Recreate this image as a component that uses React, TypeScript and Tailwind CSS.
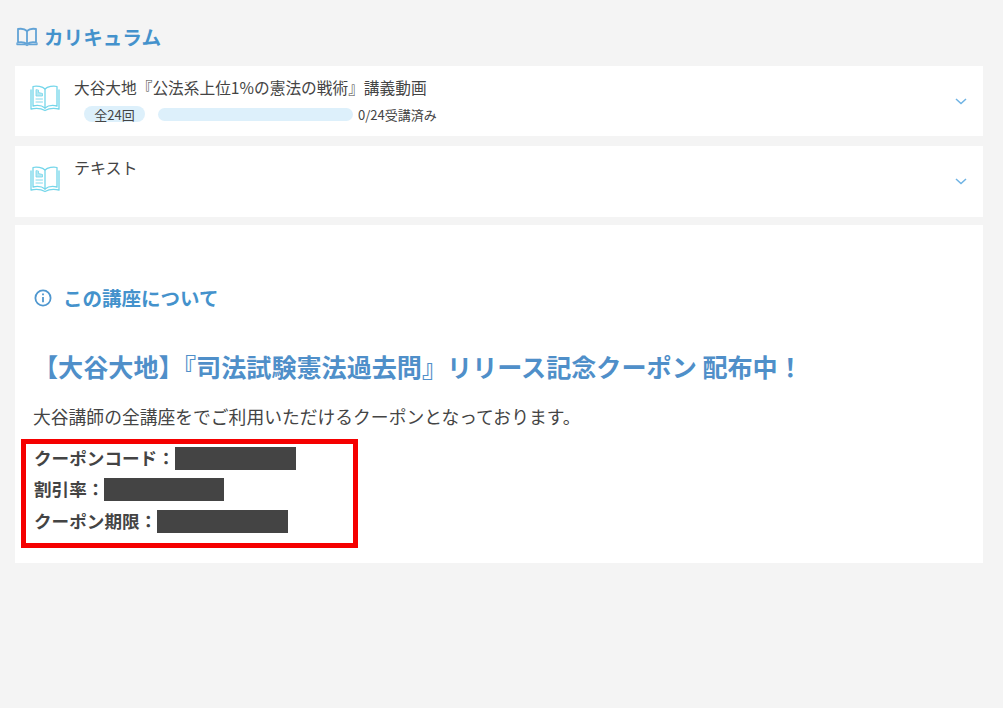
const font = { fontFamily: '"Noto Sans CJK JP", "Liberation Sans", sans-serif' };

function OpenBook() {
  return (
    <svg width="30" height="28" viewBox="0 0 30 28" fill="none" stroke="#74d6ea" strokeWidth="1.3" strokeLinejoin="round" strokeLinecap="round" className="shrink-0">
      <path d="M15 5C12.5 2.5 6.5 1.5 3 2.5V22C7 21 12 21.5 15 24C18 21.5 23 21 27 22V2.5C23.5 1.5 17.5 2.5 15 5Z" />
      <path d="M15 5V24" />
      <path d="M1 6V25C6 24 11.5 24.5 15 26.5C18.5 24.5 24 24 29 25V6" />
      <path d="M6 6V12H12.5V9.5L8.5 8.5V6.5Z" fill="#b5e8f2" strokeWidth="0.8" />
      <path d="M6 15H12.5M6 18H12.5" strokeWidth="0.9" />
    </svg>
  );
}

function SmallBook() {
  return (
    <svg width="22" height="20" viewBox="0 0 22 20" fill="none" stroke="#62a3d6" strokeWidth="1.8" strokeLinejoin="round">
      <path d="M11 4C9 2 5 1.5 2 2V15.5C5 15 9 15.5 11 17C13 15.5 17 15 20 15.5V2C17 1.5 13 2 11 4Z" />
      <path d="M11 4V17" />
      <path d="M1 15.5V17.5H9L11 18.5L13 17.5H21V15.5" strokeWidth="1.3" />
    </svg>
  );
}

function Chevron() {
  return (
    <svg width="12" height="7" viewBox="0 0 12 7" fill="none" stroke="#6fb3e4" strokeWidth="1.5" className="shrink-0">
      <path d="M1 1L6 5.5L11 1" />
    </svg>
  );
}

function Info() {
  return (
    <svg width="18" height="18" viewBox="0 0 18 18" fill="none" stroke="#4f97cf" strokeWidth="1.8" className="shrink-0">
      <circle cx="9" cy="9" r="7.6" />
      <path d="M9 8V13.2" />
      <path d="M9 4.4V6.2" />
    </svg>
  );
}

function Redact({ w }: { w: string }) {
  return <span className={`inline-block h-[23px] bg-[#444444] ${w}`} />;
}

export default function App() {
  return (
    <div style={font} className="h-[708px] w-[1003px] overflow-hidden bg-[#f4f4f4] px-[15px] pt-[25px] text-[#444444]">
      <div className="flex h-[24px] items-center gap-[6px] pl-[1px]">
        <SmallBook />
        <h2 className="text-[19.6px] leading-none font-bold text-[#4492cc]">カリキュラム</h2>
      </div>

      <div className="mt-[17px] flex h-[70px] w-[968px] items-center bg-white pr-[16px] pl-[15px]">
        <div className="mt-[-6px]"><OpenBook /></div>
        <div className="ml-[14px] flex min-w-0 flex-1 flex-col self-start pt-[11px]">
          <div className="text-[15.7px] leading-[21px] whitespace-nowrap">大谷大地『公法系上位1%の憲法の戦術』講義動画</div>
          <div className="mt-[8px] flex items-center pl-[10px]">
            <span className="flex h-[16px] w-[61px] items-center justify-center rounded-full bg-[#ddf0fb] text-[13px] leading-none">全24回</span>
            <span className="ml-[13px] h-[13px] w-[195px] rounded-full bg-[#ddf0fb]" />
            <span className="ml-[5px] text-[13px] leading-none">0/24受講済み</span>
          </div>
        </div>
        <Chevron />
      </div>

      <div className="mt-[10px] flex h-[71px] w-[968px] items-center bg-white pr-[16px] pl-[15px]">
        <div className="mt-[-6px]"><OpenBook /></div>
        <div className="ml-[14px] flex-1 self-start pt-[11px] text-[16px] leading-[21px]">テキスト</div>
        <Chevron />
      </div>

      <div className="mt-[8px] h-[338px] w-[968px] bg-white pt-[59px]">
        <div className="flex h-[28px] items-center gap-[11px] pl-[19px]">
          <Info />
          <h3 className="text-[19.5px] leading-none font-bold text-[#4492cc]">この講座について</h3>
        </div>
        <h1 className="mt-[38px] pl-[18px] text-[25.1px] leading-[32px] font-bold whitespace-nowrap text-[#4f8fc9]">
          【大谷大地】『司法試験憲法過去問』リリース記念クーポン 配布中！
        </h1>
        <p className="mt-[21px] pl-[18px] text-[17.8px] leading-[26px] whitespace-nowrap">大谷講師の全講座をでご利用いただけるクーポンとなっております。</p>
        <div className="mt-[10px] ml-[6px] h-[109px] w-[337px] border-[5px] border-[#f50000] pt-[3px] pl-[8px] text-[17.6px] font-bold">
          <div className="flex h-[23px] items-center">クーポンコード：<Redact w="w-[121px]" /></div>
          <div className="mt-[8px] flex h-[23px] items-center">割引率：<Redact w="w-[120px]" /></div>
          <div className="mt-[9px] flex h-[23px] items-center">クーポン期限：<Redact w="w-[131px]" /></div>
        </div>
      </div>
    </div>
  );
}
